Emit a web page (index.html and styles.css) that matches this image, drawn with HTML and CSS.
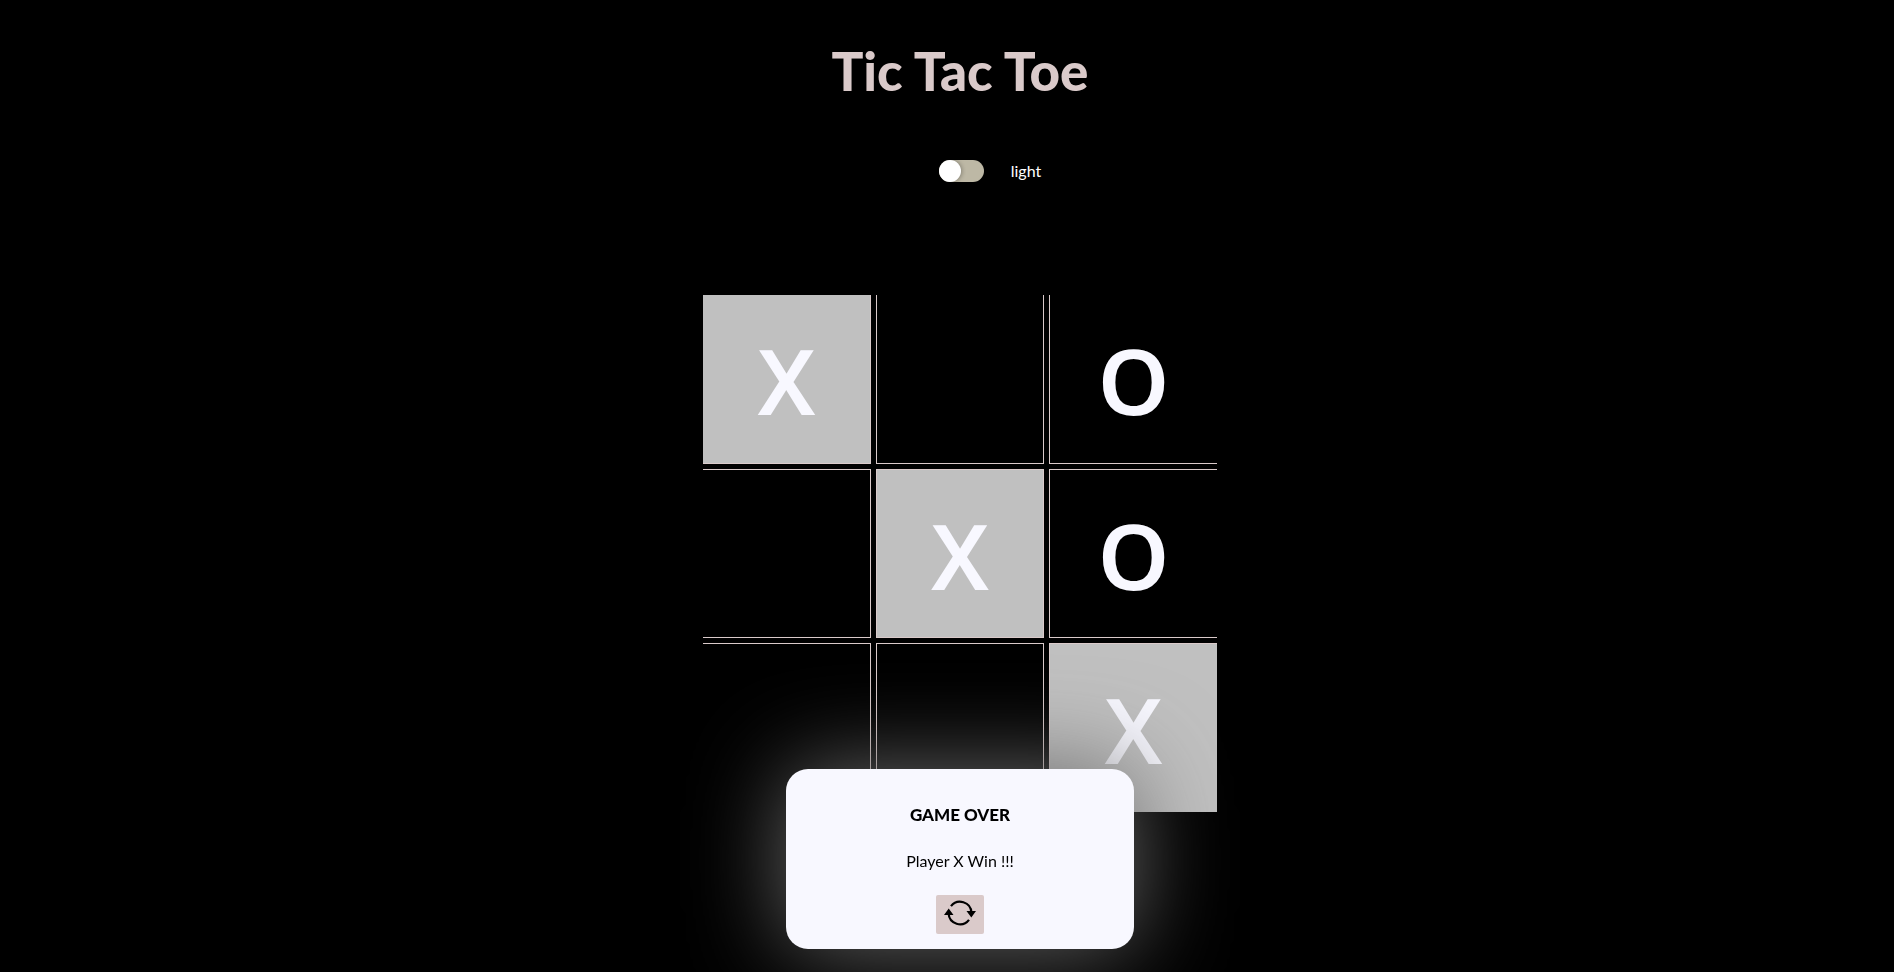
FILE: index.html
```html
<!DOCTYPE html>
<html lang="en">
<head>
<meta charset="utf-8">
<title>Tic Tac Toe</title>
<link rel="stylesheet" href="styles.css">
</head>
<body>
<main class="game">
  <h1 class="title">Tic Tac Toe</h1>
  <label class="theme">
    <input class="switch" type="checkbox" role="switch">
    <span class="theme-name">light</span>
  </label>
  <div class="board">
    <button class="cell win" type="button">X</button>
    <button class="cell" type="button" aria-label="Empty"></button>
    <button class="cell" type="button">O</button>
    <button class="cell" type="button" aria-label="Empty"></button>
    <button class="cell win" type="button">X</button>
    <button class="cell" type="button">O</button>
    <button class="cell" type="button" aria-label="Empty"></button>
    <button class="cell" type="button" aria-label="Empty"></button>
    <button class="cell win" type="button">X</button>
  </div>
</main>
<section class="dialog" role="dialog" aria-labelledby="dialog-title">
  <h2 class="dialog-title" id="dialog-title">GAME OVER</h2>
  <p class="dialog-text">Player X Win !!!</p>
  <button class="restart" type="button" aria-label="Restart">
    <svg class="restart-icon" viewBox="0 0 32 26" aria-hidden="true">
      <g fill="none" stroke="#000" stroke-width="2.2">
        <path d="M7 6.200A11.400 11.400 0 0 1 27.400 12.500"/>
        <path d="M25 19.800A11.400 11.400 0 0 1 4.600 13.500"/>
      </g>
      <path d="M22.500 11H32l-4.700 6.400zM0 15h9.500L4.700 8.600z"/>
    </svg>
  </button>
</section>
</body>
</html>
```
FILE: styles.css
```css
* { box-sizing: border-box; }

body {
  margin: 0;
  min-height: 100vh;
  padding-left: 26px;
  overflow: hidden;
  background: #000;
  color: #fff;
  font-family: Lato, "Open Sans", sans-serif;
  font-size: 16px;
}

.game {
  display: flex;
  flex-direction: column;
  align-items: center;
}

.title {
  margin: 39px 0 0;
  color: #dacaca;
  font-size: 53px;
  font-weight: 900;
  line-height: 64px;
}

.theme {
  display: flex;
  align-items: center;
  gap: 27px;
  margin: 57px 0 0 60px;
  height: 22px;
}

.switch {
  appearance: none;
  display: flex;
  width: 45px;
  height: 22px;
  margin: 0;
  border-radius: 11px;
  background: #bdb8a5;
}

.switch::before {
  content: "";
  width: 22px;
  height: 22px;
  border-radius: 50%;
  background: #fff;
  box-shadow: 1px 0 4px rgba(0, 0, 0, 0.3);
}

.switch:checked { justify-content: flex-end; }

.theme-name { line-height: 22px; }

.board {
  display: grid;
  grid-template-columns: repeat(3, 168px);
  grid-auto-rows: 169px;
  gap: 5px;
  margin-top: 113px;
}

.cell {
  padding: 3px 0 0;
  border: 1px solid #dacaca;
  background: transparent;
  color: ghostwhite;
  font-family: "Noto Sans", "Open Sans", sans-serif;
  font-size: 91px;
  font-weight: 600;
  line-height: 1;
}

.cell:nth-child(-n+3) { border-top: 0; }
.cell:nth-child(n+7) { border-bottom: 0; }
.cell:nth-child(3n+1) { border-left: 0; }
.cell:nth-child(3n) { border-right: 0; }

.win { background: silver; }

.dialog {
  position: fixed;
  left: calc(50% + 13px);
  bottom: 23px;
  transform: translateX(-50%);
  display: flex;
  flex-direction: column;
  align-items: center;
  width: 348px;
  padding: 34px 20px 15px;
  border-radius: 22px;
  background: ghostwhite;
  box-shadow: 0 0 96px dimgray;
  color: #000;
}

.dialog-title {
  margin: 0;
  font-size: 17px;
  font-weight: 900;
  line-height: 24px;
}

.dialog-text {
  margin: 22px 0;
  font-size: 16px;
  font-weight: 400;
  line-height: 24px;
}

.restart {
  display: flex;
  justify-content: center;
  width: 48px;
  height: 39px;
  padding: 5px 0 0;
  border: 0;
  border-radius: 2px;
  background: #dacaca;
}

.restart-icon {
  width: 32px;
  height: 26px;
}
```
